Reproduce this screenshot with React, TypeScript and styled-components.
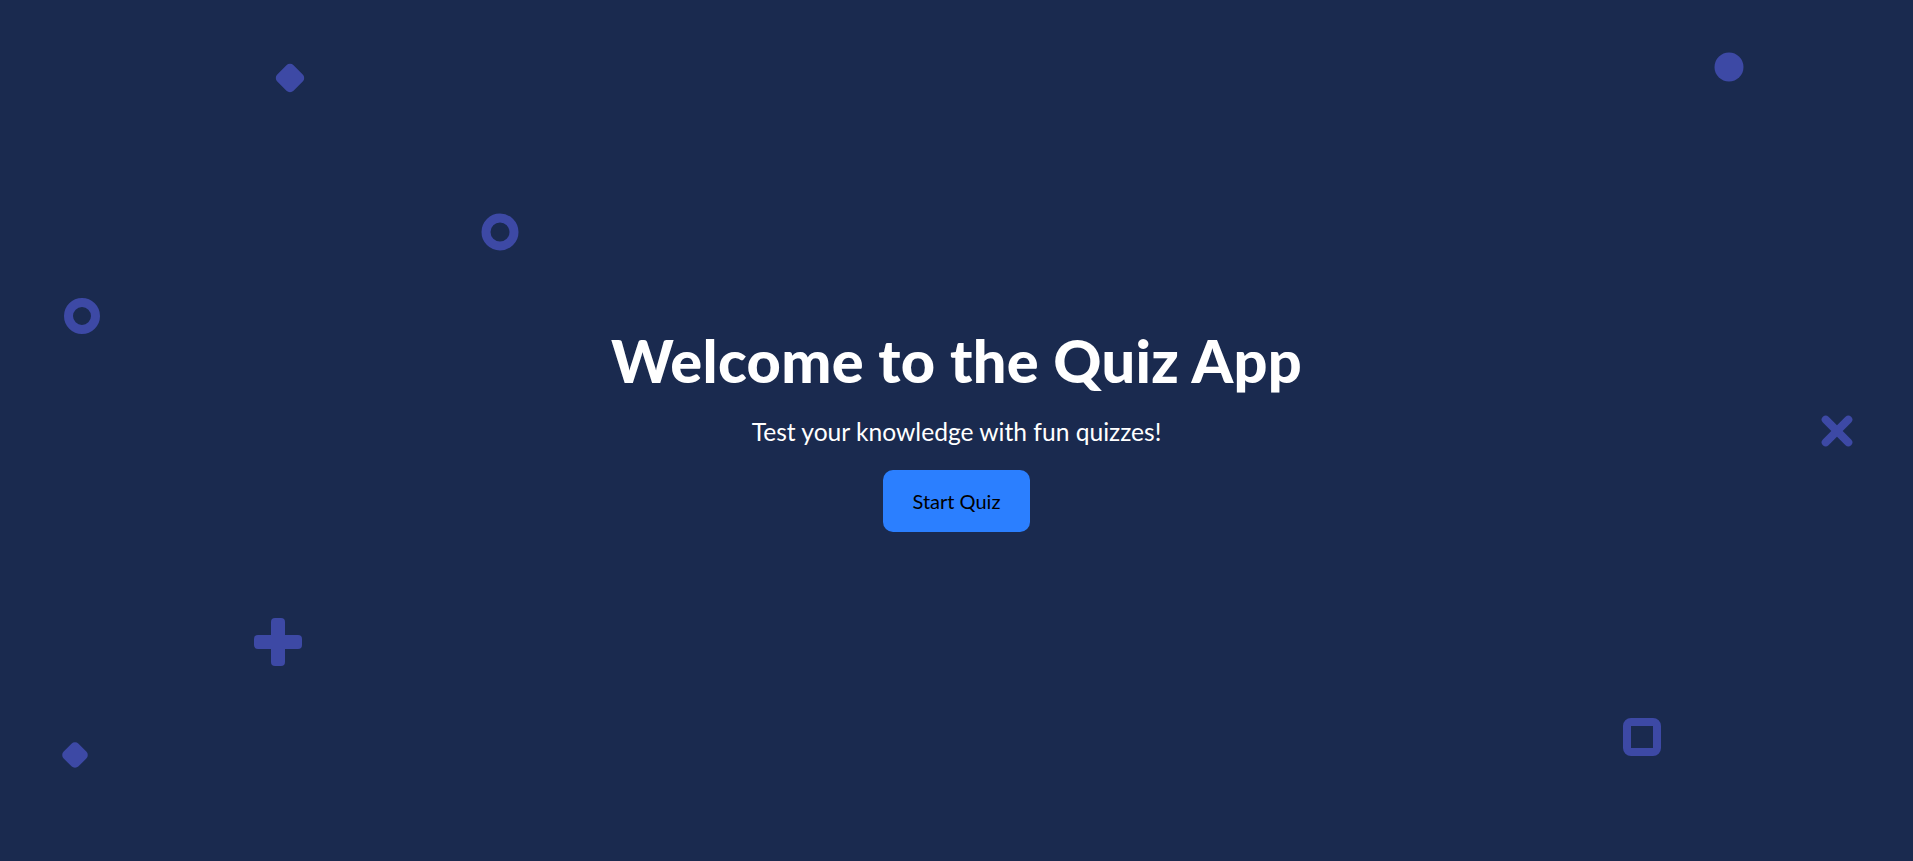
import React from "react";
import styled, { createGlobalStyle, css } from "styled-components";

const GlobalStyle = createGlobalStyle`
  html, body {
    margin: 0;
    padding: 0;
    background: #1a2a4f;
  }
  * { box-sizing: border-box; }
`;

const Page = styled.main`
  position: relative;
  min-height: 100vh;
  overflow: hidden;
  display: flex;
  flex-direction: column;
  align-items: center;
  justify-content: center;
  padding-bottom: 4px;
  background: #1a2a4f;
  color: #fff;
  font-family: Lato, "Noto Sans", sans-serif;
`;

const Hero = styled.section`
  display: flex;
  flex-direction: column;
  align-items: center;
  position: relative;
  z-index: 1;
`;

const Title = styled.h1`
  margin: 0;
  font-size: 59.5px;
  font-weight: 900;
  line-height: 1.2;
  letter-spacing: 0.3px;
`;

const Subtitle = styled.p`
  margin: 19px 0 0;
  font-size: 24.6px;
  font-weight: 400;
  line-height: 1.3;
`;

const StartButton = styled.button`
  margin-top: 22px;
  padding: 17px 30px;
  border: none;
  border-radius: 10px;
  background: #2b7fff;
  color: #000;
  font-family: inherit;
  font-size: 20px;
  line-height: 28px;
  cursor: pointer;
`;

type ShapeKind = "diamond" | "ring" | "dot" | "cross" | "plus" | "square";

const shapeColor = "#3d49a5";

const Shape = styled.span<{ $kind: ShapeKind; $size: number }>`
  position: absolute;
  width: ${(p) => p.$size}px;
  height: ${(p) => p.$size}px;
  transform: translate(-50%, -50%);
  ${(p) => {
    switch (p.$kind) {
      case "diamond":
        return css`
          background: ${shapeColor};
          border-radius: 5px;
          transform: translate(-50%, -50%) rotate(45deg);
        `;
      case "ring":
        return css`
          border: 9px solid ${shapeColor};
          border-radius: 50%;
        `;
      case "dot":
        return css`
          background: ${shapeColor};
          border-radius: 50%;
        `;
      case "square":
        return css`
          border: 8px solid ${shapeColor};
          border-radius: 8px;
        `;
      case "cross":
      case "plus":
        return css`
          &::before,
          &::after {
            content: "";
            position: absolute;
            left: 50%;
            top: 50%;
            background: ${shapeColor};
            border-radius: 4px;
          }
          &::before {
            width: 100%;
            height: ${p.$kind === "plus" ? 14 : 8}px;
            transform: translate(-50%, -50%) ${p.$kind === "cross" ? "rotate(45deg)" : ""};
          }
          &::after {
            width: ${p.$kind === "plus" ? 14 : 8}px;
            height: 100%;
            transform: translate(-50%, -50%) ${p.$kind === "cross" ? "rotate(45deg)" : ""};
          }
        `;
    }
  }}
`;

const shapes: { kind: ShapeKind; x: number; y: number; size: number }[] = [
  { kind: "diamond", x: 290, y: 78, size: 23 },
  { kind: "ring", x: 500, y: 232, size: 37 },
  { kind: "ring", x: 82, y: 316, size: 36 },
  { kind: "dot", x: 1729, y: 67, size: 29 },
  { kind: "cross", x: 1837, y: 431, size: 40 },
  { kind: "plus", x: 278, y: 642, size: 48 },
  { kind: "diamond", x: 75, y: 755, size: 21 },
  { kind: "square", x: 1642, y: 737, size: 38 },
];

export default function App() {
  return (
    <>
      <GlobalStyle />
      <Page>
        {shapes.map((s, i) => (
          <Shape key={i} $kind={s.kind} $size={s.size} style={{ left: s.x, top: s.y }} />
        ))}
        <Hero>
          <Title>Welcome to the Quiz App</Title>
          <Subtitle>Test your knowledge with fun quizzes!</Subtitle>
          <StartButton>Start Quiz</StartButton>
        </Hero>
      </Page>
    </>
  );
}
